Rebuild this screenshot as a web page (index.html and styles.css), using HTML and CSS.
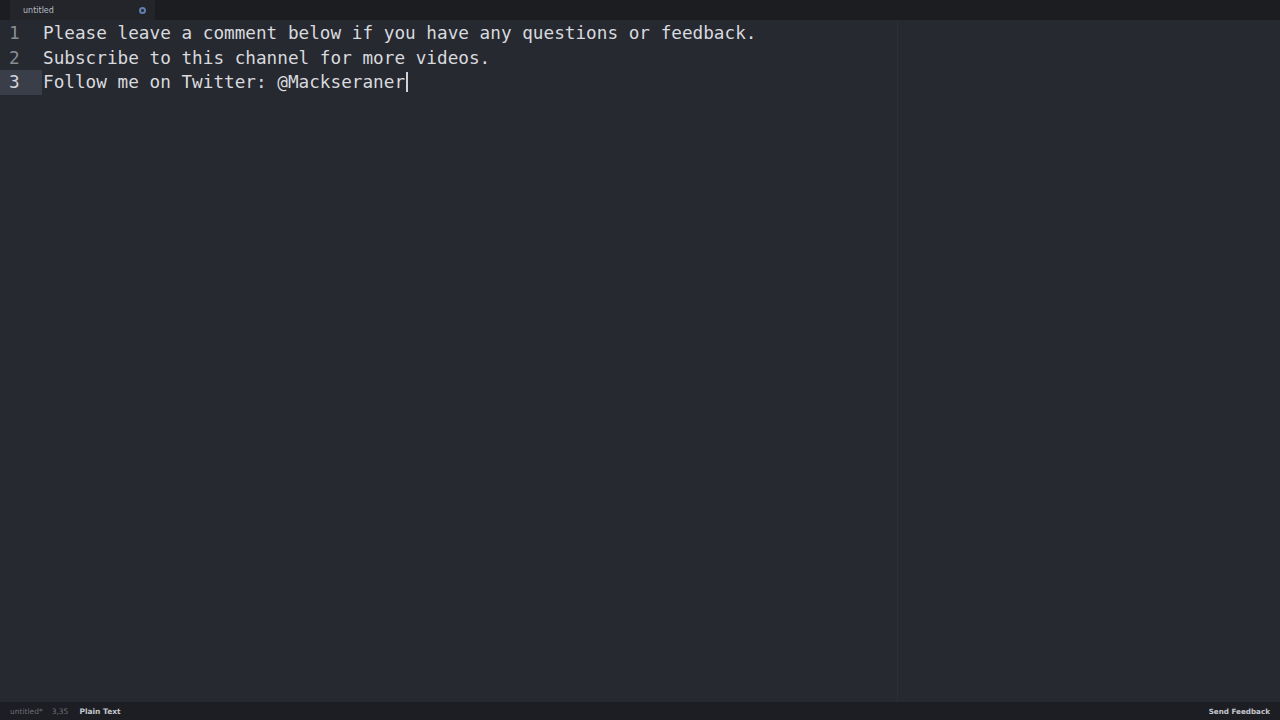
FILE: index.html
```html
<!DOCTYPE html>
<html>
<head>
<meta charset="utf-8">
<link rel="stylesheet" href="styles.css">
</head>
<body>
<div class="app">
  <div class="tabbar">
    <div class="tab-pad"></div>
    <div class="tab">
      <span class="tab-title">untitled</span>
      <span class="tab-dot"></span>
    </div>
    <div class="tab-rest"></div>
  </div>
  <div class="editor">
    <div class="gutter">
      <div class="ln">1</div>
      <div class="ln">2</div>
      <div class="ln current">3</div>
    </div>
    <div class="code">
      <div class="line">Please leave a comment below if you have any questions or feedback.</div>
      <div class="line">Subscribe to this channel for more videos.</div>
      <div class="line">Follow me on Twitter: @Mackseraner<span class="caret"></span></div>
    </div>
    <div class="ruler"></div>
  </div>
  <div class="statusbar">
    <span class="st-file">untitled*</span>
    <span class="st-pos">3,35</span>
    <span class="st-syntax">Plain Text</span>
    <span class="st-spacer"></span>
    <span class="st-feedback">Send Feedback</span>
  </div>
</div>
</body>
</html>
```
FILE: styles.css
```css
html, body {
  margin: 0;
  padding: 0;
  width: 1280px;
  height: 720px;
  overflow: hidden;
  background: #272930;
}
.app {
  display: flex;
  flex-direction: column;
  height: 720px;
  font-family: "DejaVu Sans", sans-serif;
}
.tabbar {
  display: flex;
  height: 20px;
  background: #1c1d21;
  flex: none;
}
.tab-pad {
  width: 10px;
}
.tab {
  width: 145px;
  background: #23252b;
  display: flex;
  align-items: center;
  padding: 0 0 0 13px;
  box-sizing: border-box;
}
.tab-title {
  font-size: 8px;
  color: #b9bcc4;
  flex: 1;
}
.tab-dot {
  width: 3px;
  height: 3px;
  border: 2px solid #5f7fae;
  border-radius: 50%;
  margin-right: 9px;
}
.tab-rest {
  flex: 1;
  background: #1c1d21;
}
.editor {
  flex: 1;
  display: flex;
  position: relative;
  background: #272930;
  padding-top: 1px;
}
.gutter {
  width: 42px;
  flex: none;
  font-family: "DejaVu Sans Mono", monospace;
  font-size: 17.7px;
}
.ln {
  height: 24.6px;
  line-height: 24.6px;
  color: #8a8d95;
  padding-left: 9px;
}
.ln.current {
  background: #3a3e49;
  color: #d4d6da;
}
.code {
  flex: 1;
  padding-left: 1px;
  font-family: "DejaVu Sans Mono", monospace;
  font-size: 17.7px;
  color: #d8dadf;
}
.line {
  height: 24.6px;
  line-height: 24.6px;
  white-space: pre;
}
.caret {
  display: inline-block;
  width: 1.5px;
  height: 20px;
  background: #d0d2d6;
  vertical-align: -4px;
  margin-left: 1px;
}
.ruler {
  position: absolute;
  left: 897px;
  top: 0;
  bottom: 0;
  width: 1px;
  background: #2d2f37;
}
.statusbar {
  height: 18px;
  flex: none;
  background: #1d1e23;
  display: flex;
  align-items: center;
  padding: 0 10px;
  font-size: 7.5px;
  color: #6b6e76;
}
.st-pos {
  margin-left: 9px;
}
.st-syntax {
  margin-left: 11px;
  color: #c4c7cd;
  font-weight: bold;
}
.st-spacer {
  flex: 1;
}
.st-feedback {
  color: #c4c7cd;
  font-weight: bold;
  font-size: 7.2px;
}
```
